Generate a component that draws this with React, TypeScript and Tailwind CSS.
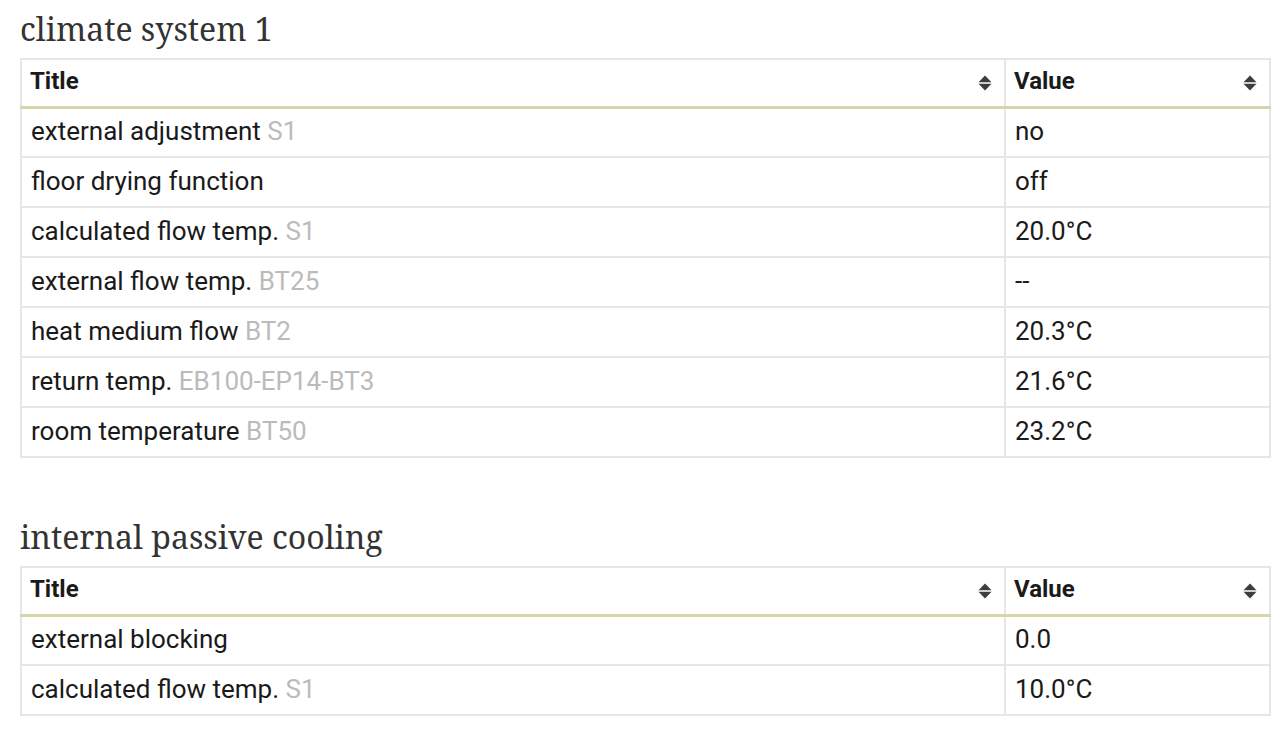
const climate = [
  { title: "external adjustment", tag: "S1", value: "no" },
  { title: "floor drying function", tag: "", value: "off" },
  { title: "calculated flow temp.", tag: "S1", value: "20.0°C" },
  { title: "external flow temp.", tag: "BT25", value: "--" },
  { title: "heat medium flow", tag: "BT2", value: "20.3°C" },
  { title: "return temp.", tag: "EB100-EP14-BT3", value: "21.6°C" },
  { title: "room temperature", tag: "BT50", value: "23.2°C" },
];

const cooling = [
  { title: "external blocking", tag: "", value: "0.0" },
  { title: "calculated flow temp.", tag: "S1", value: "10.0°C" },
];

type Row = { title: string; tag: string; value: string };

const SortIcon = () => (
  <svg width="14" height="18" viewBox="0 0 14 18" className="shrink-0 mr-[4px] mt-[3px]">
    <path d="M7 1.5 L13.5 8.2 H0.5 Z" fill="#3d3d3d" />
    <path d="M7 16.5 L13.5 9.8 H0.5 Z" fill="#3d3d3d" />
  </svg>
);

const Section = ({ name, rows }: { name: string; rows: Row[] }) => (
  <section>
    <h2 className="font-['Noto_Serif','DejaVu_Serif',serif] text-[32px] leading-[40px] text-[#333] pt-[9px] pb-[9px]">
      {name}
    </h2>
    <table className="w-[1251px] border-collapse border-2 border-[#e6e6e6] font-['Roboto',sans-serif] text-[26px] text-[#1a1a1a] table-fixed">
      <colgroup>
        <col className="w-[984px]" />
        <col />
      </colgroup>
      <thead>
        <tr className="h-[48px] border-b-[3px] border-[#d6d6a8]">
          <th className="border-r-2 border-[#e6e6e6] px-[8px] pb-[3px] text-left font-bold text-[24px]">
            <div className="flex items-center justify-between">
              <span>Title</span>
              <SortIcon />
            </div>
          </th>
          <th className="px-[8px] pb-[3px] text-left font-bold text-[24px]">
            <div className="flex items-center justify-between">
              <span>Value</span>
              <SortIcon />
            </div>
          </th>
        </tr>
      </thead>
      <tbody>
        {rows.map((r) => (
          <tr key={r.title} className="h-[50px] border-t-2 border-[#e6e6e6] first:border-t-0">
            <td className="border-r-2 border-[#e6e6e6] px-[9px] pb-[1px]">
              {r.title}
              {r.tag && <span className="text-[#bbb]"> {r.tag}</span>}
            </td>
            <td className="px-[9px] pb-[1px]">{r.value}</td>
          </tr>
        ))}
      </tbody>
    </table>
  </section>
);

export default function App() {
  return (
    <div className="bg-white min-h-screen pl-[20px]">
      <Section name="climate system 1" rows={climate} />
      <div className="h-[50px]" />
      <Section name="internal passive cooling" rows={cooling} />
    </div>
  );
}
